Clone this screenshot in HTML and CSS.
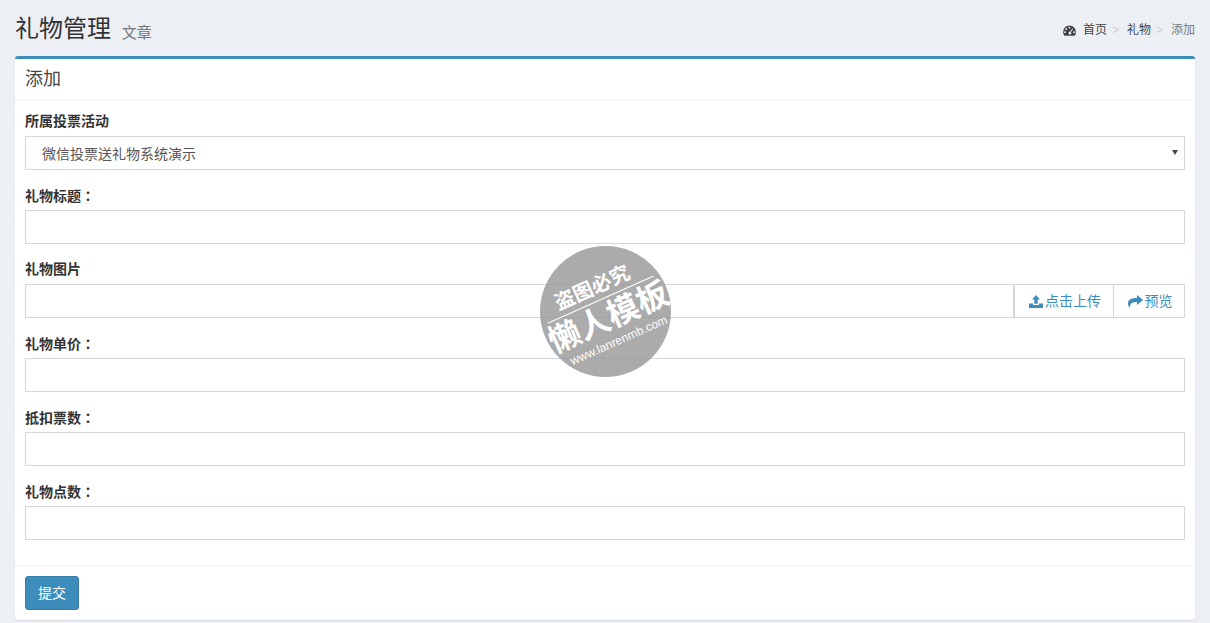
FILE: index.html
```html
<!DOCTYPE html>
<html lang="zh-CN">
<head>
    <meta charset="UTF-8">
    <meta name="viewport" content="width=device-width, initial-scale=1.0">
    <title>礼物管理</title>
    <link rel="stylesheet" href="styles.css">
</head>
<body>
    <section class="content-header">
        <h1>礼物管理 <small>文章</small></h1>
        <ol class="breadcrumb">
            <li>
                <a href="#" class="home">
                    <svg class="icon-dash" viewBox="0 0 14 12" width="13" height="11">
                        <path fill-rule="evenodd" d="M7 .5a7 7 0 0 1 7 7c0 1.5-.4 2.8-1.2 3.9-.1.2-.3.3-.5.3H1.700c-.2 0-.4-.1-.5-.3A7 7 0 0 1 0 7.500a7 7 0 0 1 7-7zM7 1.800a1 1 0 1 0 0 2 1 1 0 0 0 0-2zM3.300 3.400a1 1 0 1 0 0 2 1 1 0 0 0 0-2zM2 6.800a1 1 0 1 0 0 2 1 1 0 0 0 0-2zM12 6.800a1 1 0 1 0 0 2 1 1 0 0 0 0-2zM10.200 3.700L7.600 7.300a1.500 1.500 0 1 0 1 .5l2.400-3.600z"/>
                    </svg>
                    首页
                </a>
            </li>
            <li><a href="#">礼物</a></li>
            <li class="active">添加</li>
        </ol>
    </section>

    <section class="content">
        <div class="box">
            <div class="box-header">添加</div>
            <form class="box-body">
                <div class="form-group">
                    <label for="vote">所属投票活动</label>
                    <div class="select-wrap">
                        <select id="vote" class="form-control">
                            <option>微信投票送礼物系统演示</option>
                        </select>
                    </div>
                </div>
                <div class="form-group">
                    <label for="title">礼物标题<span class="colon" lang="zh-Hant">：</span></label>
                    <input id="title" class="form-control" type="text">
                </div>
                <div class="form-group">
                    <label for="pic">礼物图片</label>
                    <div class="input-group">
                        <input id="pic" class="form-control" type="text">
                        <a href="#" class="addon addon-upload">
                            <svg viewBox="0 0 14 13" width="14" height="13">
                                <path d="M7 0l4 4.500H8.700v4.300H5.300V4.500H3zM0 8.500h4v1.400h6V8.500h4V13H0z"/>
                            </svg>点击上传
                        </a>
                        <a href="#" class="addon addon-preview">
                            <svg viewBox="0 0 15 13" width="15" height="13">
                                <path d="M9 0l6 5-6 5V7C5 7 2 7.500 1.700 13 .5 11.500 0 9.800 0 8.300 0 4.500 3.500 3 9 3z"/>
                            </svg>预览
                        </a>
                    </div>
                </div>
                <div class="form-group">
                    <label for="price">礼物单价<span class="colon" lang="zh-Hant">：</span></label>
                    <input id="price" class="form-control" type="text">
                </div>
                <div class="form-group">
                    <label for="votes">抵扣票数<span class="colon" lang="zh-Hant">：</span></label>
                    <input id="votes" class="form-control" type="text">
                </div>
                <div class="form-group">
                    <label for="points">礼物点数<span class="colon" lang="zh-Hant">：</span></label>
                    <input id="points" class="form-control" type="text">
                </div>
            </form>
            <div class="box-footer">
                <button type="button" class="btn-primary">提交</button>
            </div>
        </div>
    </section>

    <div class="stamp">
        <div class="stamp-inner">
            <div class="stamp-top">盗图必究</div>
            <div class="stamp-main">懒人模板</div>
            <div class="stamp-url">www.lanrenmb.com</div>
        </div>
    </div>
</body>
</html>
```

FILE: styles.css
```css
* {
    box-sizing: border-box;
}

body {
    margin: 0;
    background: #ecf0f5;
    color: #333;
    font-family: "Liberation Sans", "Noto Sans CJK SC", sans-serif;
    font-size: 14px;
    line-height: 20px;
}

a {
    color: #3c8dbc;
    text-decoration: none;
}

.content-header {
    display: flex;
    justify-content: space-between;
    align-items: flex-start;
    height: 41px;
    padding: 15px 15px 0;
}

.content-header h1 {
    height: 26px;
    margin: 0;
    font-size: 24px;
    font-weight: 400;
    line-height: 28px;
}

.content-header small {
    margin-left: 4px;
    font-size: 15px;
    color: #777;
    vertical-align: -1px;
}

.breadcrumb {
    display: flex;
    margin: 5px 0 0;
    padding: 0;
    list-style: none;
    font-size: 12px;
}

.breadcrumb li + li::before {
    content: ">";
    padding: 0 8px 0 5px;
    color: #ccc;
}

.breadcrumb a {
    color: #444;
}

.breadcrumb .home {
    display: flex;
    align-items: center;
    gap: 7px;
}

.breadcrumb .active {
    color: #777;
}

.icon-dash {
    fill: #444;
}

.content {
    padding: 15px 15px 3px;
}

.box {
    background: #fff;
    border-top: 3px solid #3c8dbc;
    border-radius: 3px;
    box-shadow: 0 1px 1px rgba(0, 0, 0, 0.1);
}

.box-header {
    padding: 10px;
    font-size: 18px;
    line-height: 21px;
    color: #444;
    border-bottom: 1px solid #f4f4f4;
}

.box-body {
    padding: 10px;
}

.form-group {
    margin-bottom: 15px;
}

.form-group label {
    display: block;
    height: 20px;
    margin-bottom: 5px;
    font-weight: 700;
}

/* centred fullwidth colon */
.colon {
    font-family: "Noto Sans CJK TC", sans-serif;
}

.form-control {
    display: block;
    width: 100%;
    height: 34px;
    padding: 6px 12px;
    background: #fff;
    border: 1px solid #d2d6de;
    border-radius: 0;
    color: #555;
    font: inherit;
    outline: none;
}

.select-wrap {
    position: relative;
}

.select-wrap select {
    padding: 7px 12px 5px 16px;
    appearance: none;
}

.select-wrap::after {
    content: "";
    position: absolute;
    right: 7px;
    top: 14px;
    border-style: solid;
    border-width: 5px 3px 0;
    border-color: #444 transparent transparent;
}

.input-group {
    display: flex;
}

.input-group .form-control {
    flex: 1;
}

.addon {
    display: flex;
    align-items: center;
    justify-content: center;
    height: 34px;
    padding-left: 2px;
    border: 1px solid #d2d6de;
    border-left: 0;
}

.addon svg {
    fill: #3c8dbc;
}

.addon-upload {
    width: 100px;
    border-left: 1px solid #d2d6de;
    gap: 2px;
}

.addon-preview {
    width: 71px;
    gap: 2px;
}

.box-footer {
    padding: 10px;
    border-top: 1px solid #f4f4f4;
}

.btn-primary {
    display: block;
    width: 54px;
    height: 34px;
    padding: 0;
    background: #3c8dbc;
    border: 1px solid #367fa9;
    border-radius: 3px;
    color: #fff;
    font: inherit;
}

/* watermark lying over the form */
.stamp {
    position: absolute;
    left: 540px;
    top: 246px;
    display: flex;
    align-items: center;
    justify-content: center;
    width: 131px;
    height: 131px;
    background: rgba(150, 150, 150, 0.8);
    border-radius: 50%;
    color: #fff;
}

.stamp-inner {
    display: flex;
    flex-direction: column;
    align-items: center;
    flex-shrink: 0;
    width: 116px;
    transform: rotate(-24deg);
}

.stamp-top {
    width: 100%;
    padding: 0 6px 3px 0;
    border-bottom: 1px solid #fff;
    font-size: 20px;
    font-weight: 700;
    line-height: 22px;
    text-align: center;
}

.stamp-main {
    font-size: 32px;
    font-weight: 700;
    line-height: 38px;
    white-space: nowrap;
}

.stamp-url {
    font-size: 12px;
    line-height: 13px;
    white-space: nowrap;
}
```
